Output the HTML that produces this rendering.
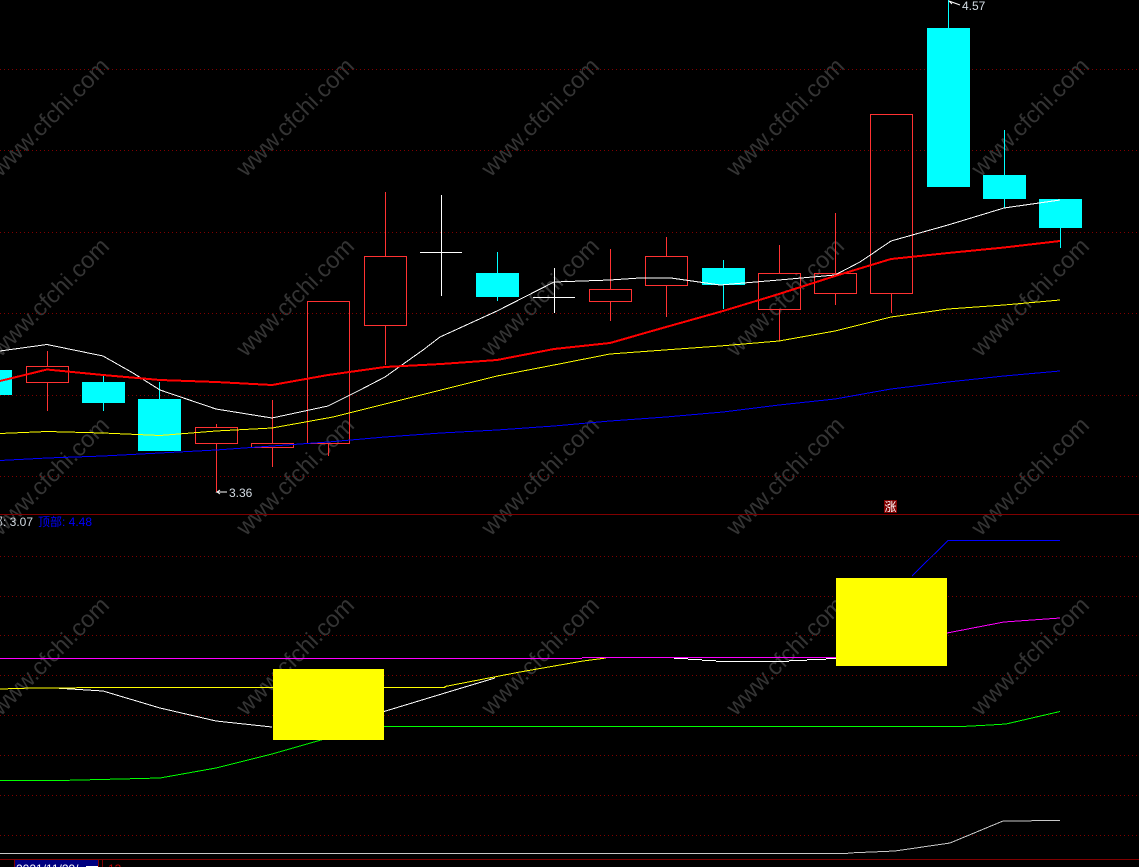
<!DOCTYPE html>
<html><head><meta charset="utf-8"><style>
html,body{margin:0;padding:0;background:#000;width:1139px;height:867px;overflow:hidden}
svg{display:block}
text{font-family:"Liberation Sans","Noto Sans CJK SC",sans-serif}
</style></head><body>
<svg width="1139" height="867" viewBox="0 0 1139 867" xmlns="http://www.w3.org/2000/svg">
<rect width="1139" height="867" fill="#000"/>
<g fill="#343434" font-size="23.5" text-anchor="middle" transform="translate(-2,-1)">
<text transform="translate(52,118) rotate(-45)" y="8">www.cfchi.com</text><text transform="translate(297,118) rotate(-45)" y="8">www.cfchi.com</text><text transform="translate(542,118) rotate(-45)" y="8">www.cfchi.com</text><text transform="translate(787,118) rotate(-45)" y="8">www.cfchi.com</text><text transform="translate(1032,118) rotate(-45)" y="8">www.cfchi.com</text>
<text transform="translate(52,298) rotate(-45)" y="8">www.cfchi.com</text><text transform="translate(297,298) rotate(-45)" y="8">www.cfchi.com</text><text transform="translate(542,298) rotate(-45)" y="8">www.cfchi.com</text><text transform="translate(787,298) rotate(-45)" y="8">www.cfchi.com</text><text transform="translate(1032,298) rotate(-45)" y="8">www.cfchi.com</text>
<text transform="translate(52,477) rotate(-45)" y="8">www.cfchi.com</text><text transform="translate(297,477) rotate(-45)" y="8">www.cfchi.com</text><text transform="translate(542,477) rotate(-45)" y="8">www.cfchi.com</text><text transform="translate(787,477) rotate(-45)" y="8">www.cfchi.com</text><text transform="translate(1032,477) rotate(-45)" y="8">www.cfchi.com</text>
<text transform="translate(52,657) rotate(-45)" y="8">www.cfchi.com</text><text transform="translate(297,657) rotate(-45)" y="8">www.cfchi.com</text><text transform="translate(542,657) rotate(-45)" y="8">www.cfchi.com</text><text transform="translate(787,657) rotate(-45)" y="8">www.cfchi.com</text><text transform="translate(1032,657) rotate(-45)" y="8">www.cfchi.com</text>
</g>
<g shape-rendering="crispEdges">
<path stroke="#800000" stroke-dasharray="1 3" fill="none" d="M0 69.5H1139M0 150.5H1139M0 232.5H1139M0 313.5H1139M0 395.5H1139M0 476.5H1139M0 556.5H1139M0 596.5H1139M0 635.5H1139M0 675.5H1139M0 715.5H1139M0 755.5H1139M0 795.5H1139M0 835.5H1139"/>
<path stroke="#800000" fill="none" d="M0 514.5H1139M0 859.5H1139"/>
<path stroke="#c8c8c8" fill="none" d="M0 853.5H848"/>

<!-- wicks red -->
<path stroke="#ff3232" fill="none" d="M47.5 351V366M47.5 383V411M216.5 424V427M216.5 444V492M272.5 400V443M272.5 448V467M328.5 444V456M385.5 192V256M385.5 326V365M610.5 249V289M610.5 302V321M666.5 237V256M666.5 286V317M779.5 245V273M779.5 310V341M835.5 213V273M835.5 294V305M891.5 294V313"/>
<!-- wicks cyan -->
<path stroke="#00ffff" fill="none" d="M103.5 375V411M159.5 382V399M497.5 252V301M723.5 260V309M948.5 0V28M1004.5 130V208M1060.5 228V248"/>
<!-- doji -->
<path stroke="#fff" fill="none" d="M441.5 195V296M420 252.5H462M554.5 268V313M533 297.5H575"/>
<!-- hollow red -->
<g fill="#000" fill-opacity="0" stroke="#ff3232">
<rect x="26.5" y="366.5" width="42" height="16"/>
<rect x="195.5" y="427.5" width="42" height="16"/>
<rect x="251.5" y="443.5" width="42" height="4"/>
<rect x="307.5" y="301.5" width="42" height="142"/>
<rect x="364.5" y="256.5" width="42" height="69"/>
<rect x="589.5" y="289.5" width="42" height="12"/>
<rect x="645.5" y="256.5" width="42" height="29"/>
<rect x="758.5" y="273.5" width="42" height="36"/>
<rect x="814.5" y="273.5" width="42" height="20"/>
<rect x="870.5" y="114.5" width="42" height="179"/>
</g>
<!-- cyan bodies -->
<g fill="#00ffff">
<rect x="0" y="370" width="12" height="25"/>
<rect x="82" y="382" width="43" height="21"/>
<rect x="138" y="399" width="43" height="52"/>
<rect x="476" y="273" width="43" height="24"/>
<rect x="702" y="268" width="43" height="17"/>
<rect x="927" y="28" width="43" height="159"/>
<rect x="983" y="175" width="43" height="24"/>
<rect x="1039" y="199" width="43" height="29"/>
</g>

<g fill="none" stroke-linejoin="round">
<polyline stroke="#0000ff" stroke-width="1" points="0,460.5 47,458 103,456 160,453 216,450 272,446 328,442 385,437 441,433 497,430 554,426 610,421 666,417 723,412 779,405 835,399 891,389 948,382 1004,376 1060,371"/>
<polyline stroke="#ffff00" stroke-width="1" points="0,433.5 47,431.5 103,433 160,435.5 216,431 272,428 333,417 385,404 441,390 497,376 554,365 610,354 671,349.5 720,346 779,341 835,331 891,317 948,309 1004,305 1060,300"/>
<polyline stroke="#ffffff" stroke-width="1" points="0,351 47,344.5 103,356 133,373 160,390 216,409 272,418 328,406 360,390 385,377 423,350 440,337 497,311 554,282 610,280 640,278 671,278 720,285 779,280 835,275 860,262 891,241 948,225 1004,208 1060,200"/>
<polyline stroke="#ff0000" stroke-width="2" points="0,381 47,369.5 103,375 160,380 216,382 272,385 328,375 385,367 441,364 497,360 554,349 610,343 666,327 723,311 779,294 835,276 891,259 948,253 1004,247.5 1060,241"/>

<!-- lower pane -->
<polyline stroke="#0000ff" stroke-width="1" points="912,576 948,540.5 1060,540.5"/>
<polyline stroke="#ff00ff" stroke-width="1" points="947,633 1004,622 1060,618"/>
<polyline stroke="#ffffff" stroke-width="1" points="55,688 103,691 160,708 216,721 272,727"/>
<polyline stroke="#ffffff" stroke-width="1" points="384,711.5 445,693 495,678"/>
<polyline stroke="#ffff00" stroke-width="1" points="0,689 33,688 120,687.5 445,687.5 445,686.5 520,672 583,661 606,658"/>
<polyline stroke="#00ff00" stroke-width="1" points="0,780.5 60,780.5 160,778 216,768 272,754 328,738 384,726.5 962,726.5 990,725 1006,724 1060,711.5"/>
<polyline stroke="#c8c8c8" stroke-width="1" points="848,853 895,851 950,843 1003,821 1060,820.5"/>
</g>

<g fill="#ffffff">
<rect x="674" y="658" width="14" height="1"/>
<rect x="688" y="659" width="14" height="1"/>
<rect x="702" y="660" width="14" height="1"/>
<rect x="716" y="661" width="73" height="1"/>
<rect x="789" y="660" width="18" height="1"/>
<rect x="807" y="659" width="19" height="1"/>
<rect x="826" y="658" width="10" height="1"/>
</g>
<rect x="0" y="658" width="582" height="1" fill="#ff00ff"/>
<rect x="582" y="657" width="254" height="1" fill="#ff00ff"/>

<g fill="#ffff00">
<rect x="273" y="669" width="111" height="71"/>
<rect x="836" y="578" width="111" height="88"/>
</g>
</g>

<!-- labels -->
<path stroke="#fff" fill="none" d="M227 492H217L220 490M217 492L220 494M960 5L949 1L952 4"/>
<text x="229" y="497" fill="#d4dce4" font-size="12">3.36</text>
<text x="962" y="10" fill="#d4dce4" font-size="12">4.57</text>
<text x="-21" y="526" fill="#d0d8e0" font-size="12">底部: 3.07</text>
<text x="38" y="526" fill="#0000ff" font-size="12">顶部: 4.48</text>

<rect x="884" y="500" width="13" height="13" fill="#800000"/>
<text x="884.5" y="511" fill="#fff" font-size="12">涨</text>

<!-- status bar -->
<g shape-rendering="crispEdges">
<rect x="15" y="860" width="83" height="7" fill="#000080"/>
<path stroke="#800000" fill="none" d="M14.5 860V867M98.5 860V867M102.5 860V867"/>
<rect x="86" y="866" width="12" height="1" fill="#fff"/>
</g>
<text x="16" y="873" fill="#fff" font-size="12">2021/11/29/一</text>
<text x="108" y="873" fill="#c00000" font-size="12">13</text>
</svg>
</body></html>
